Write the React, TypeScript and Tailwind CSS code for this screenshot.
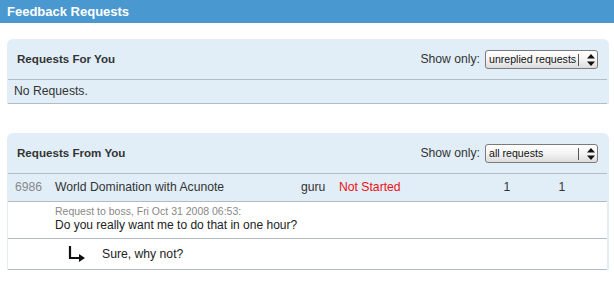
import React from "react";

function Arrows() {
  return (
    <svg width="8" height="12" viewBox="0 0 8 12">
      <polygon points="4,0 8,4.5 0,4.5" fill="#111" />
      <polygon points="0,7.5 8,7.5 4,12" fill="#111" />
    </svg>
  );
}

function FakeSelect({ label }: { label: string }) {
  return (
    <div className="relative flex h-[19px] w-[113px] items-center rounded-[3px] border border-[#7b7b7b] bg-gradient-to-b from-white via-[#f4f4f4] to-[#dcdcdc] pl-[3px] text-[10.6px] text-[#111]">
      <span className="leading-none">{label}</span>
      <span className="absolute left-[92px] top-[3px] h-[12px] w-px bg-[#555]" />
      <span className="absolute left-[101px] top-[3px] flex">
        <Arrows />
      </span>
    </div>
  );
}

function ReplyArrow() {
  return (
    <svg width="18" height="17" viewBox="0 0 18 17">
      <path d="M2 0 V12 H12" stroke="#111" strokeWidth="2.2" fill="none" />
      <polygon points="11,8 17,12 11,16" fill="#111" />
    </svg>
  );
}

export default function App() {
  return (
    <div
      className="h-[284px] w-[614px] overflow-hidden bg-white text-[12.2px] text-[#333]"
      style={{ fontFamily: '"Liberation Sans", Arial, sans-serif' }}
    >
      <div className="flex h-[23px] items-center bg-[#4a98d0] pl-[7px] text-[13px] font-bold text-white">
        Feedback Requests
      </div>

      <div className="ml-[7px] mt-[16px] w-[602px] rounded-t-[6px] bg-[#e1eef8] pl-px pr-[2px]">
        <div className="flex h-[40px] items-center justify-between pl-[9px] pr-[9px]">
          <span className="text-[11.6px] font-bold text-[#333]">Requests For You</span>
          <div className="flex items-center gap-[5px]">
            <span>Show only:</span>
            <FakeSelect label="unreplied requests" />
          </div>
        </div>
        <div className="flex h-[25px] items-center border-y border-[#b2bcc2] pl-[6px]">
          No Requests.
        </div>
      </div>

      <div className="ml-[7px] mt-[29px] w-[602px] rounded-t-[6px] bg-[#e1eef8] pl-px pr-[2px]">
        <div className="flex h-[40px] items-center justify-between pl-[9px] pr-[9px]">
          <span className="text-[11.6px] font-bold text-[#333]">Requests From You</span>
          <div className="flex items-center gap-[5px]">
            <span>Show only:</span>
            <FakeSelect label="all requests" />
          </div>
        </div>
        <div className="flex h-[29px] items-center border-y border-[#b2bcc2]">
          <span className="w-[47px] pl-[7px] text-[#888]">6986</span>
          <span className="w-[246px]">World Domination with Acunote</span>
          <span className="w-[38px]">guru</span>
          <span className="w-[140px] text-[#ee1111]">Not Started</span>
          <span className="w-[56px] text-center">1</span>
          <span className="w-[54px] text-center">1</span>
        </div>
        <div className="h-[37px] border-b border-[#b2bcc2] bg-white pl-[47px] pt-[3px]">
          <div className="text-[10.5px] leading-[12px] text-[#888]">
            Request to boss, Fri Oct 31 2008 06:53:
          </div>
          <div className="text-[12px] leading-[16px] text-[#222]">
            Do you really want me to do that in one hour?
          </div>
        </div>
        <div className="flex h-[31px] items-center border-b border-[#b2bcc2] bg-white pl-[60px]">
          <span className="mt-[1px] flex">
            <ReplyArrow />
          </span>
          <span className="ml-[16px] text-[#222]">Sure, why not?</span>
        </div>
      </div>
    </div>
  );
}
